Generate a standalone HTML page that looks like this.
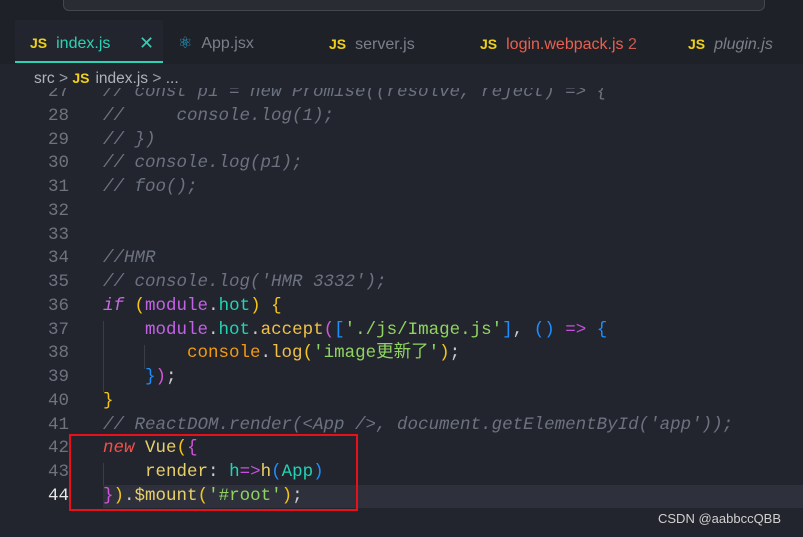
<!DOCTYPE html>
<html><head><meta charset="utf-8"><style>
*{margin:0;padding:0;box-sizing:border-box}
body{width:803px;height:537px;overflow:hidden;background:#23252e;font-family:"Liberation Sans",sans-serif;position:relative}
.top{position:absolute;left:0;top:0;width:803px;height:20px;background:#1f2128}
.search{position:absolute;left:63px;top:-10px;width:702px;height:21px;border:1px solid #44474f;border-radius:6px;background:#2a2c34}
.tabs{position:absolute;left:0;top:20px;width:803px;height:44px;background:#1f2128}
.tab{position:absolute;top:2px;height:44px;font-size:16px;line-height:44px;color:#7b7f8a}
.js{color:#f0d01a;font-weight:bold;font-size:14px;margin-right:9px}
.bc{position:absolute;left:34px;top:66px;font-size:15.5px;color:#aeb2bb;line-height:24px}
.code{position:absolute;left:0;top:88px;width:803px;height:449px;overflow:hidden}
.ln,.cl{position:absolute;height:24px;line-height:24px;font-family:"Liberation Mono","Noto Sans CJK SC",monospace;font-size:17.5px;white-space:pre}
.ln{width:69px;text-align:right;color:#6e737e;left:0}
.cl{left:103px}
.c{color:#6c7280;font-style:italic}
.hl{position:absolute;left:103px;top:397px;width:700px;height:23px;background:#2e313b}
.guide{position:absolute;width:1px;background:#3a3d46}
</style></head><body>
<div class="top"><div class="search"></div></div>
<div class="tabs">
<div class="tab" style="left:15px;top:0;width:148px;color:#2ad3b6;background:#23252e;border-bottom:2px solid #2ad3b6;height:43px;line-height:46px;padding-left:15px"><span class="js">JS</span>index.js<span style="position:absolute;left:124px;color:#2ad3b6;font-size:18px">✕</span></div>
<div class="tab" style="left:178px"><span style="color:#22a9d6;margin-right:9px">⚛</span>App.jsx</div>
<div class="tab" style="left:329px"><span class="js">JS</span>server.js</div>
<div class="tab" style="left:480px;color:#e86050"><span class="js">JS</span>login.webpack.js <span style="color:#c85a4f">2</span></div>
<div class="tab" style="left:688px;font-style:italic"><span class="js" style="font-style:normal">JS</span>plugin.js</div>
</div>
<div class="bc">src <span style="color:#9a9ea8">&gt;</span> <span class="js" style="margin-right:6px">JS</span>index.js <span style="color:#9a9ea8">&gt;</span> ...</div>
<div class="code">
<div class="hl"></div>
<div class="guide" style="left:103px;top:233px;height:71px"></div>
<div class="guide" style="left:144px;top:257px;height:24px"></div>
<div class="guide" style="left:103px;top:375px;height:22px"></div>
<div class="ln" style="top:-8px">27</div><div class="cl c" style="top:-8px">// const p1 = new Promise((resolve, reject) =&gt; {</div>
<div class="ln" style="top:16px">28</div><div class="cl c" style="top:16px">//     console.log(1);</div>
<div class="ln" style="top:40px">29</div><div class="cl c" style="top:40px">// })</div>
<div class="ln" style="top:63px">30</div><div class="cl c" style="top:63px">// console.log(p1);</div>
<div class="ln" style="top:87px">31</div><div class="cl c" style="top:87px">// foo();</div>
<div class="ln" style="top:111px">32</div>
<div class="ln" style="top:135px">33</div>
<div class="ln" style="top:158px">34</div><div class="cl c" style="top:158px">//HMR</div>
<div class="ln" style="top:182px">35</div><div class="cl c" style="top:182px">// console.log('HMR 3332');</div>
<div class="ln" style="top:206px">36</div><div class="cl" style="top:206px"><span style="color:#c56ae0;font-style:italic">if</span> <span style="color:#f5c518">(</span><span style="color:#c362e6">module</span><span style="color:#ccc">.</span><span style="color:#22d4b4">hot</span><span style="color:#f5c518">)</span> <span style="color:#f5c518">{</span></div>
<div class="ln" style="top:230px">37</div><div class="cl" style="top:230px">    <span style="color:#c362e6">module</span><span style="color:#ccc">.</span><span style="color:#22d4b4">hot</span><span style="color:#ccc">.</span><span style="color:#efc04a">accept</span><span style="color:#d256d8">(</span><span style="color:#1c8fff">[</span><span style="color:#8fd460">'./js/Image.js'</span><span style="color:#1c8fff">]</span><span style="color:#ccc">,</span> <span style="color:#1c8fff">()</span> <span style="color:#c850e0">=&gt;</span> <span style="color:#1c8fff">{</span></div>
<div class="ln" style="top:253px">38</div><div class="cl" style="top:253px">        <span style="color:#f39a12">console</span><span style="color:#ccc">.</span><span style="color:#efc04a">log</span><span style="color:#f5c518">(</span><span style="color:#8fd460">'image更新了'</span><span style="color:#f5c518">)</span><span style="color:#ccc">;</span></div>
<div class="ln" style="top:277px">39</div><div class="cl" style="top:277px">    <span style="color:#1c8fff">}</span><span style="color:#d256d8">)</span><span style="color:#ccc">;</span></div>
<div class="ln" style="top:301px">40</div><div class="cl" style="top:301px"><span style="color:#f5c518">}</span></div>
<div class="ln" style="top:325px">41</div><div class="cl c" style="top:325px">// ReactDOM.render(&lt;App /&gt;, document.getElementById('app'));</div>
<div class="ln" style="top:348px">42</div><div class="cl" style="top:348px"><span style="color:#f0504a;font-style:italic">new</span> <span style="color:#e8d06a">Vue</span><span style="color:#f5c518">(</span><span style="color:#d256d8">{</span></div>
<div class="ln" style="top:372px">43</div><div class="cl" style="top:372px">    <span style="color:#e8d06a">render</span><span style="color:#ccc">:</span> <span style="color:#22d4b4">h</span><span style="color:#c850e0">=&gt;</span><span style="color:#e8d06a">h</span><span style="color:#1c8fff">(</span><span style="color:#22d4b4">App</span><span style="color:#1c8fff">)</span></div>
<div class="ln" style="top:396px;color:#e6e6e6">44</div><div class="cl" style="top:396px"><span style="color:#d256d8">}</span><span style="color:#f5c518">)</span><span style="color:#ccc">.</span><span style="color:#e8d06a">$mount</span><span style="color:#f5c518">(</span><span style="color:#8fd460">'#root'</span><span style="color:#f5c518">)</span><span style="color:#ccc">;</span></div>
</div>
<div style="position:absolute;left:69px;top:434px;width:289px;height:77px;border:2px solid #e8101a"></div>
<div style="position:absolute;left:658px;top:511px;font-size:13px;color:#d0d0d0">CSDN @aabbccQBB</div>
</body></html>
